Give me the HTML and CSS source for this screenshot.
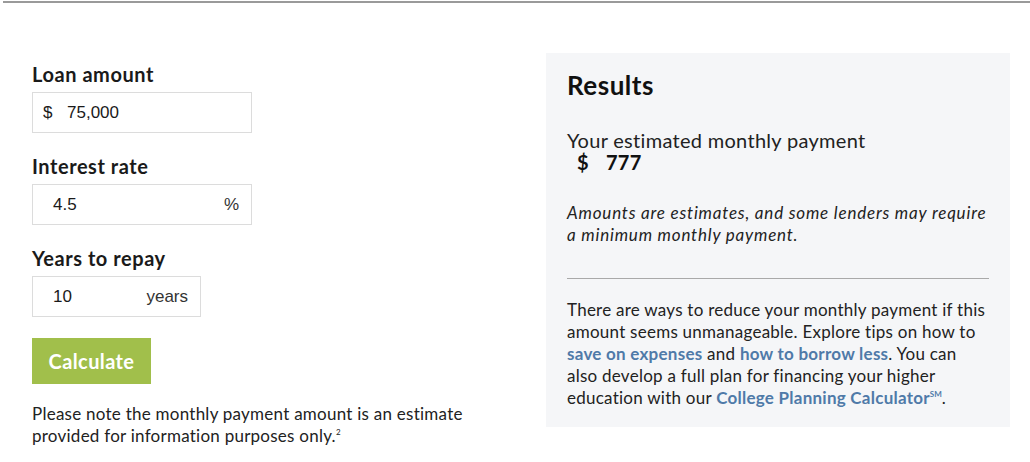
FILE: index.html
```html
<!DOCTYPE html>
<html>
<head>
<meta charset="utf-8">
<link rel="stylesheet" href="styles.css">
</head>
<body>
<div class="topline"></div>
<div class="page">
  <div class="form">
    <div class="field">
      <label class="label">Loan amount</label>
      <div class="input wide"><span class="prefix">$</span><span class="value">75,000</span></div>
    </div>
    <div class="field">
      <label class="label">Interest rate</label>
      <div class="input wide"><span class="value indent">4.5</span><span class="suffix">%</span></div>
    </div>
    <div class="field">
      <label class="label">Years to repay</label>
      <div class="input narrow"><span class="value indent">10</span><span class="suffix">years</span></div>
    </div>
    <button class="calc">Calculate</button>
    <p class="note">Please note the monthly payment amount is an estimate provided for information purposes only.<sup>2</sup></p>
  </div>
  <div class="results">
    <h2 class="title">Results</h2>
    <div class="est">Your estimated monthly payment</div>
    <div class="amount"><span class="dollar">$</span><span>777</span></div>
    <p class="disclaimer">Amounts are estimates, and some lenders may require a minimum monthly payment.</p>
    <hr class="rule">
    <p class="tips">There are ways to reduce your monthly payment if this amount seems unmanageable. Explore tips on how to <a href="#">save on expenses</a> and <a href="#">how to borrow less</a>. You can also develop a full plan for financing your higher education with our <a href="#">College Planning Calculator<sup>SM</sup></a>.</p>
  </div>
</div>
</body>
</html>
```

FILE: styles.css
```css
* { box-sizing: border-box; }
html, body { margin: 0; padding: 0; background: #fff; }
body { font-family: Lato, "Open Sans", sans-serif; color: #1f1f1f; width: 1030px; height: 462px; overflow: hidden; }
.topline { height: 2px; background: #9a9a9a; margin: 1px 0 0 3px; }
.page { display: flex; padding: 0 20px 0 32px; }
.form { width: 480px; padding-top: 59px; display: flex; flex-direction: column; }
.field { display: flex; flex-direction: column; margin-bottom: 21px; }
.label { font-size: 20px; font-weight: 700; letter-spacing: 0.55px; line-height: 24px; margin-bottom: 6px; color: #1a1a1a; }
.input { height: 41px; border: 1px solid #dcdcdc; display: flex; align-items: center; font-family: "Liberation Sans", Arial, sans-serif; font-size: 17px; color: #1a1a1a; padding: 0 12px 0 10px; }
.wide { width: 220px; }
.narrow { width: 169px; }
.prefix { width: 24px; }
.value { flex: 1; }
.indent { padding-left: 10px; }
.suffix { color: #333; }
.calc { width: 119px; height: 46px; background: #a1bf4b; border: none; color: #fff; font-family: Lato, sans-serif; font-weight: 700; font-size: 20px; letter-spacing: 0.4px; margin: 0; padding: 0; cursor: pointer; }
.note { margin: 19px 0 0; font-size: 17px; letter-spacing: 0.25px; line-height: 22px; color: #222; }
.note sup { font-size: 8px; vertical-align: 7px; line-height: 0; }
.results { margin-left: 34px; margin-top: 50px; width: 464px; height: 374px; background: #f5f6f8; padding: 17px 21px 0 21px; }
.title { margin: 0; font-size: 26px; font-weight: 700; letter-spacing: 0.5px; line-height: 30px; color: #111; }
.est { margin-top: 29px; font-size: 20px; letter-spacing: 0.3px; line-height: 22px; color: #222; }
.amount { font-size: 20px; font-weight: 700; line-height: 22px; padding-left: 10px; color: #111; letter-spacing: 0.3px; }
.dollar { margin-right: 17px; }
.disclaimer { margin: 29px 0 0; font-size: 17px; font-style: italic; letter-spacing: 0.8px; line-height: 22px; color: #222; }
.rule { border: none; border-top: 1px solid #a9a9a9; margin: 32px 0 0; }
.tips { margin: 20px 0 0; font-size: 17px; letter-spacing: 0.25px; line-height: 22px; color: #222; }
.tips a { color: #4f7aa8; font-weight: 700; text-decoration: none; }
.tips sup { font-size: 8px; vertical-align: 7px; line-height: 0; letter-spacing: 0; }
```
